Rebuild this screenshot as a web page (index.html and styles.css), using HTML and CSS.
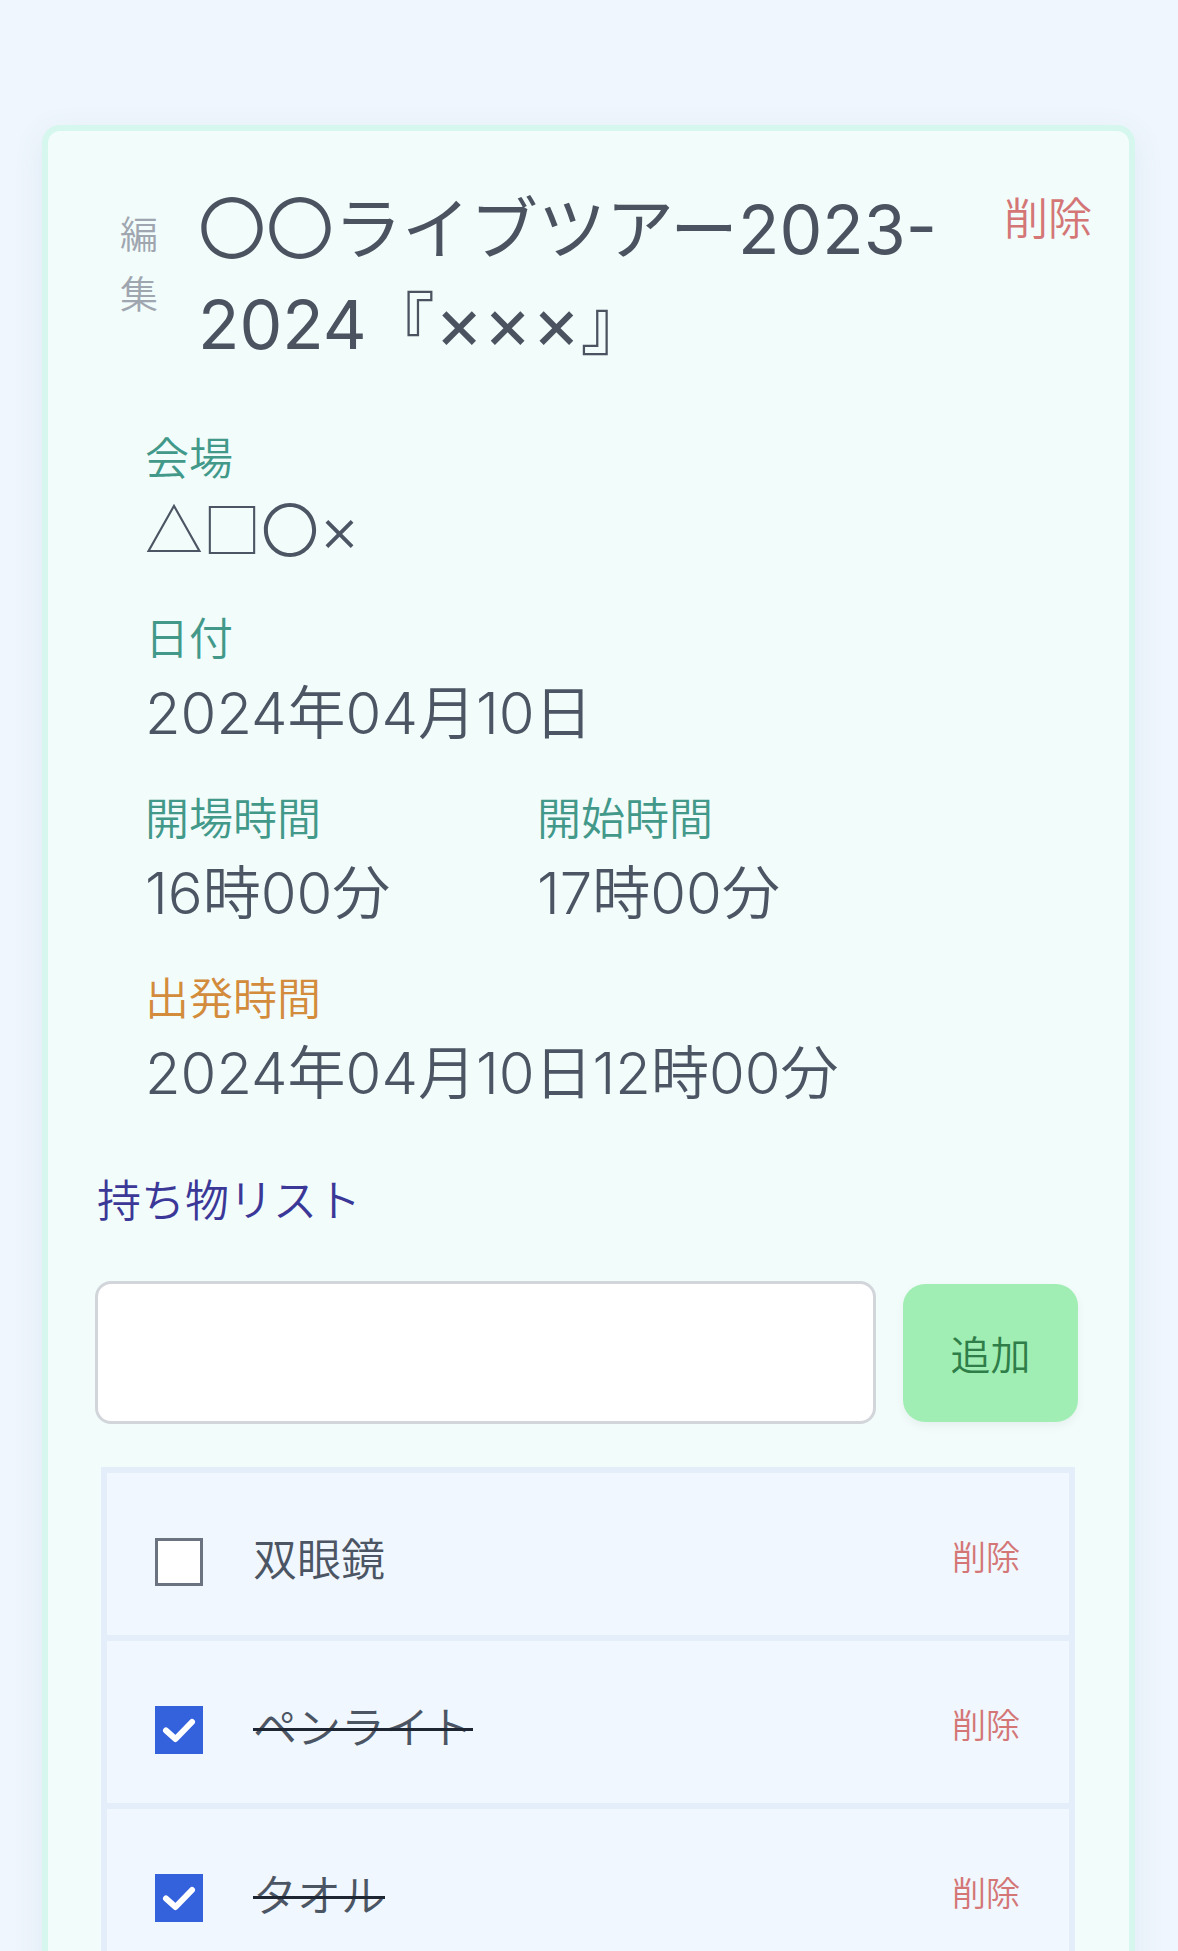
FILE: index.html
```html
<!DOCTYPE html>
<html lang="ja">
<head>
<meta charset="utf-8">
<title>ライブ詳細</title>
<link rel="stylesheet" href="styles.css">
</head>
<body>
<main class="page">
  <section class="card">
    <header class="title-row">
      <button class="edit-btn">編集</button>
      <h1 class="title">〇〇ライブツアー2023-<wbr>2024『<span class="times">×××</span>』</h1>
      <button class="delete-btn">削除</button>
    </header>

    <div class="fields">
      <div class="field">
        <div class="label">会場</div>
        <div class="value value-venue"><span class="cjk">△□〇</span><span class="times">×</span></div>
      </div>
      <div class="field">
        <div class="label">日付</div>
        <div class="value">2024年04月10日</div>
      </div>
      <div class="field field-pair">
        <div>
          <div class="label">開場時間</div>
          <div class="value">16時00分</div>
        </div>
        <div>
          <div class="label">開始時間</div>
          <div class="value">17時00分</div>
        </div>
      </div>
      <div class="field">
        <div class="label label-depart">出発時間</div>
        <div class="value">2024年04月10日12時00分</div>
      </div>
    </div>

    <h2 class="list-title">持ち物リスト</h2>

    <form class="add-row">
      <input class="add-input" type="text">
      <button class="add-btn" type="button">追加</button>
    </form>

    <ul class="items">
      <li class="item">
        <span class="check"></span>
        <span class="item-name">双眼鏡</span>
        <button class="item-delete">削除</button>
      </li>
      <li class="item done">
        <span class="check checked"><svg viewBox="0 0 48 48" width="48" height="48"><path d="M11 24.5 L20.5 33 L37 16" fill="none" stroke="#ffffff" stroke-width="6" stroke-linecap="round" stroke-linejoin="round"/></svg></span>
        <span class="item-name">ペンライト</span>
        <button class="item-delete">削除</button>
      </li>
      <li class="item done">
        <span class="check checked"><svg viewBox="0 0 48 48" width="48" height="48"><path d="M11 24.5 L20.5 33 L37 16" fill="none" stroke="#ffffff" stroke-width="6" stroke-linecap="round" stroke-linejoin="round"/></svg></span>
        <span class="item-name">タオル</span>
        <button class="item-delete">削除</button>
      </li>
    </ul>
  </section>
</main>
</body>
</html>
```

FILE: styles.css
```css
* {
  box-sizing: border-box;
}

html, body {
  margin: 0;
  padding: 0;
}

body {
  background: #eff6fd;
  font-family: Inter, "Noto Sans CJK JP", sans-serif;
  font-weight: 350;
  color: #4b5563;
}

.cjk {
  font-family: "Noto Sans CJK JP", sans-serif;
}

.times {
  font-size: 1.08em;
  line-height: 0;
}

.page {
  padding: 125px 43px 40px 42px;
}

.card {
  background: #f2fcfb;
  border: 6px solid #d5f7ed;
  border-radius: 18px;
  box-shadow: 0 8px 30px rgba(90, 120, 160, 0.10);
  padding: 44px 51px 60px 47px;
}

button {
  font-family: inherit;
  font-weight: inherit;
  background: none;
  border: 0;
  padding: 0;
  cursor: pointer;
}

/* title row */
.title-row {
  display: flex;
  align-items: flex-start;
  padding-left: 25px;
  margin-right: -14px;
}

.edit-btn {
  width: 38px;
  font-size: 38px;
  line-height: 60px;
  color: #a0a6b0;
  margin-top: 29px;
  word-break: break-all;
  text-align: left;
}

.title {
  flex: 1;
  margin: 7px 0 0 40px;
  font-size: 68px;
  line-height: 95px;
  height: 190px;
  font-weight: 400;
  color: #4b5260;
}

.delete-btn {
  font-size: 44px;
  line-height: 66px;
  color: #d47676;
  margin-top: 11px;
  margin-left: 12px;
  white-space: nowrap;
}

/* fields */
.fields {
  padding-left: 50px;
  margin-top: 54px;
  display: flex;
  flex-direction: column;
  gap: 32px;
}

.field-pair {
  display: grid;
  grid-template-columns: 392px 1fr;
}

.label {
  font-size: 44px;
  line-height: 66px;
  height: 66px;
  color: #42998a;
}

.label-depart {
  color: #d38b3c;
}

.value {
  font-size: 58px;
  line-height: 82px;
  height: 82px;
  color: #4b5563;
}

.value-venue {
  line-height: 70px;
}

/* list */
.list-title {
  margin: 54px 0 0 2px;
  font-size: 44px;
  line-height: 66px;
  height: 66px;
  font-weight: 350;
  color: #3b3898;
}

.add-row {
  display: flex;
  align-items: center;
  gap: 27px;
  margin-top: 47px;
}

.add-input {
  flex: 1;
  height: 143px;
  background: #ffffff;
  border: 3px solid #d2d5da;
  border-radius: 16px;
  font-size: 44px;
  font-family: inherit;
  padding: 0 24px;
}

.add-btn {
  width: 175px;
  height: 138px;
  background: #a0eeb3;
  border-radius: 22px;
  font-size: 40px;
  color: #2f7d49;
  box-shadow: 0 4px 10px rgba(0, 0, 0, 0.05);
}

.items {
  list-style: none;
  margin: 43px 3px 0 6px;
  padding: 0;
  border: 6px solid #e3eefa;
}

.item {
  height: 162px;
  background: #f0f7fe;
  display: flex;
  align-items: center;
  padding: 8px 49px 0 48px;
}

.item + .item {
  border-top: 6px solid #e3eefa;
  height: 168px;
}

.check {
  width: 48px;
  height: 48px;
  flex: none;
  border: 3px solid #6b7280;
  background: #ffffff;
  margin-top: 8px;
  display: block;
}

.check.checked {
  border: 0;
  background: #3462dd;
}

.check svg {
  display: block;
}

.item-name {
  flex: 1;
  margin-left: 50px;
  margin-top: 3px;
  font-size: 44px;
  line-height: 66px;
  color: #4b5563;
}

.done .item-name {
  text-decoration: line-through;
  text-decoration-color: #1e2533;
  text-decoration-thickness: 3px;
}

.item-delete {
  font-size: 34px;
  line-height: 50px;
  color: #d47676;
}
```
